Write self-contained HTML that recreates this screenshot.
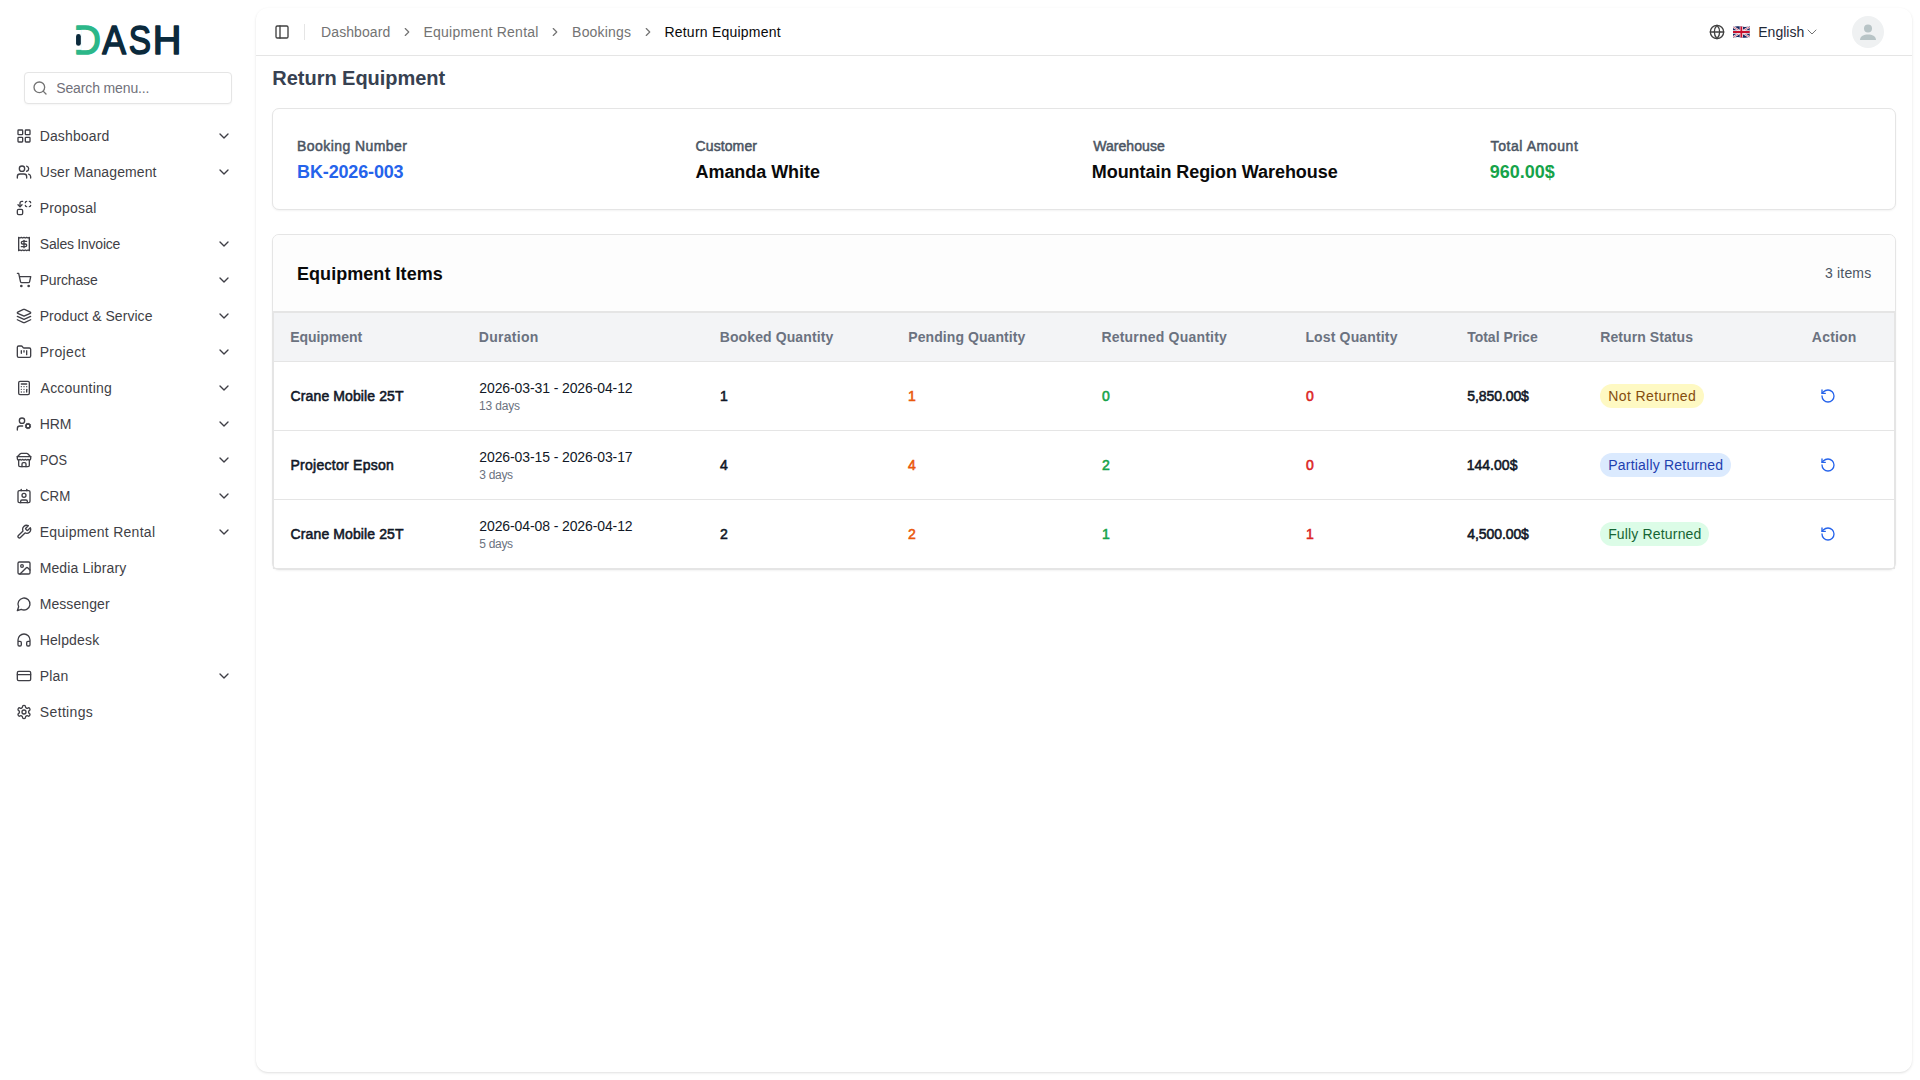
<!DOCTYPE html>
<html lang="en">
<head>
<meta charset="utf-8">
<title>Return Equipment</title>
<style>
*{box-sizing:border-box;margin:0;padding:0}
html,body{width:1920px;height:1080px;overflow:hidden}
body{font-family:"Liberation Sans",sans-serif;background:#fff;color:#0a0a0a;position:relative;font-size:14px}
svg.i{width:16px;height:16px;fill:none;stroke:currentColor;stroke-width:2;stroke-linecap:round;stroke-linejoin:round;display:block;flex:none}
span.t{position:relative;white-space:nowrap}
em{font-style:normal}
/* ---------- sidebar ---------- */
.sb{position:absolute;left:0;top:0;width:256px;height:1080px;color:#3f3f46}
.logo{position:absolute;left:0;top:0;width:256px;height:70px}
.search{position:absolute;left:24px;top:72px;width:208px;height:32px;border:1px solid #e5e5e5;border-radius:4px;background:#fff;box-shadow:0 1px 2px rgba(0,0,0,.04)}
.search svg{position:absolute;left:7px;top:7px;color:#737373}
.search span{position:absolute;left:32px;top:0;line-height:30px;font-size:14px;color:#71717a}
.menu{position:absolute;left:8px;top:120px;width:232px;list-style:none}
.menu li{height:32px;margin-bottom:4px;display:flex;align-items:center;padding:0 8px;position:relative;font-size:14px;color:#3f3f46}
.menu li svg.i{margin-right:8px}
.menu li svg.c{position:absolute;right:8px;top:8px;margin:0}
/* ---------- main ---------- */
.main{position:absolute;left:256px;top:8px;width:1656px;height:1064px;background:#fff;border-radius:12px;box-shadow:0 1px 3px rgba(0,0,0,.10),0 1px 2px -1px rgba(0,0,0,.10)}
.hd{position:absolute;left:0;top:0;width:100%;height:48px;border-bottom:1px solid #e5e5e5}
.hd .tg{position:absolute;left:18px;top:16px;color:#404040}
.hd .sep{position:absolute;left:48px;top:16px;width:1px;height:16px;background:#e5e5e5}
.bc{position:absolute;left:65px;top:0;height:48px;display:flex;align-items:center;font-size:14px;color:#737373;white-space:nowrap}
.bc svg{position:absolute;top:17px;width:14px;height:14px;color:#737373}
.bc span.t{margin-right:34px}
.bc .cur{color:#0a0a0a}
.lang{position:absolute;left:1453px;top:0;height:48px;display:flex;align-items:center;color:#1f2937;font-size:14px}
.lang .gl{color:#404040}
.avatar{position:absolute;left:1596px;top:8px;width:32px;height:32px;border-radius:50%;background:#eff1f2;overflow:hidden}
h1{position:absolute;left:16px;top:56px;font-size:20px;line-height:28px;font-weight:700;color:#374151;white-space:nowrap}
.card{position:absolute;left:16px;width:1624px;border:1px solid #e5e5e5;border-radius:7px;background:#fff;box-shadow:0 1px 2px rgba(0,0,0,.05)}
.c1{top:100px;height:102px}
.c1 .col{position:absolute;top:27px}
.c1 .lb{font-size:14px;line-height:20px;color:#4b5563;-webkit-text-stroke:.5px currentColor;white-space:nowrap}
.c1 .vl{font-size:18px;line-height:28px;font-weight:700;color:#0a0a0a;margin-top:2px;white-space:nowrap}
.c2{top:226px;height:336px}
.c2 .ch{position:absolute;left:0;top:0;width:100%;height:77px;background:#fdfdfd;border-bottom:1px solid #e5e5e5;border-radius:6px 6px 0 0}
.c2 .ch b{position:absolute;left:24px;top:25px;font-size:18px;line-height:28px;color:#0a0a0a;white-space:nowrap}
.c2 .ch em{position:absolute;right:24px;top:28px;font-size:14px;line-height:20px;color:#4b5563;white-space:nowrap}
.tw{position:absolute;left:0;top:77px;width:1622px;height:257px;border:1px solid #e5e5e5;overflow:hidden}
table{position:absolute;left:0;top:0;width:1620px;border-collapse:separate;border-spacing:0;table-layout:fixed}
th{height:49px;background:#f3f4f6;text-align:left;font-size:14px;font-weight:700;color:#6b7280;padding:0 0 0 16px;border-bottom:1px solid #e5e5e5;white-space:nowrap}
td{height:69px;padding:0 0 0 16px;font-size:14px;border-bottom:1px solid #e5e5e5;white-space:nowrap;vertical-align:middle;color:#111827}
tr:last-child td{border-bottom:none;height:68px}
td.m{-webkit-text-stroke:.55px currentColor}
td .d1{font-size:14px;line-height:20px;color:#111827}
td .d2{font-size:12px;line-height:16px;color:#6b7280}
.or{color:#ea580c}.gr{color:#16a34a}.rd{color:#dc2626}
.bdg{display:inline-block;height:24px;line-height:24px;border-radius:12px;padding:0 8px;font-size:14px}
.by{background:#fef9c3;color:#854d0e}.bb{background:#dbeafe;color:#1e40af}.bg{background:#dcfce7;color:#166534}
td .i{color:#2563eb;margin-left:8px}
</style>
</head>
<body>
<svg width="0" height="0" style="position:absolute">
<defs>
<symbol id="chev" viewBox="0 0 24 24"><path d="m6 9 6 6 6-6"/></symbol>
<symbol id="chevr" viewBox="0 0 24 24"><path d="m9 18 6-6-6-6"/></symbol>
<symbol id="rot" viewBox="0 0 24 24"><path d="M3 12a9 9 0 1 0 9-9 9.750 9.750 0 0 0-6.740 2.740L3 8"/><path d="M3 3v5h5"/></symbol>
</defs>
</svg>

<aside class="sb">
<svg class="logo" width="256" height="70" viewBox="0 0 256 70">
<text y="54.06" font-family="Liberation Sans, sans-serif" font-size="40.45" stroke-width="1.6" stroke-linejoin="round"><tspan x="73.71" textLength="27.06" lengthAdjust="spacingAndGlyphs" fill="#2cb789" stroke="#2cb789">D</tspan><tspan x="102.37" textLength="23.73" lengthAdjust="spacingAndGlyphs" fill="#0b2a3c" stroke="#0b2a3c">A</tspan><tspan x="128.70" textLength="22.23" lengthAdjust="spacingAndGlyphs" fill="#0b2a3c" stroke="#0b2a3c">S</tspan><tspan x="152.72" textLength="28.63" lengthAdjust="spacingAndGlyphs" fill="#0b2a3c" stroke="#0b2a3c">H</tspan></text>
<rect x="74.5" y="30.0" width="7.3" height="19.8" fill="#fff"/>
<rect x="76.05" y="34" width="4.8" height="11.8" rx="2.4" fill="#0b2a3c"/>
</svg>

<div class="search"><svg class="i" viewBox="0 0 24 24"><circle cx="11" cy="11" r="8"/><path d="m21 21-4.300-4.300"/></svg><span id="srch" class="t" style="letter-spacing:-0.125px;left:31.20px">Search menu...</span></div>
<ul class="menu">
<li><svg class="i" viewBox="0 0 24 24"><rect width="7" height="7" x="3" y="3" rx="1"/><rect width="7" height="7" x="14" y="3" rx="1"/><rect width="7" height="7" x="14" y="14" rx="1"/><rect width="7" height="7" x="3" y="14" rx="1"/></svg><span id="m0" class="t" style="letter-spacing:0.146px;left:-0.38px">Dashboard</span><svg class="i c"><use href="#chev"/></svg></li>
<li><svg class="i" viewBox="0 0 24 24"><path d="M16 21v-2a4 4 0 0 0-4-4H6a4 4 0 0 0-4 4v2"/><circle cx="9" cy="7" r="4"/><path d="M22 21v-2a4 4 0 0 0-3-3.87"/><path d="M16 3.13a4 4 0 0 1 0 7.75"/></svg><span id="m1" class="t" style="letter-spacing:0.113px;left:-0.25px">User Management</span><svg class="i c"><use href="#chev"/></svg></li>
<li><svg class="i" viewBox="0 0 24 24"><path d="M14 4a2 2 0 0 1 2-2"/><path d="M16 10a2 2 0 0 1-2-2"/><path d="M20 2a2 2 0 0 1 2 2"/><path d="M22 8a2 2 0 0 1-2 2"/><path d="m3 7 3 3 3-3"/><path d="M6 10V5a3 3 0 0 1 3-3h1"/><rect x="2" y="14" width="8" height="8" rx="2"/></svg><span id="m2" class="t" style="letter-spacing:0.227px;left:-0.38px">Proposal</span></li>
<li><svg class="i" viewBox="0 0 24 24"><path d="M4 2v20l2-1 2 1 2-1 2 1 2-1 2 1 2-1 2 1V2l-2 1-2-1-2 1-2-1-2 1-2-1-2 1Z"/><path d="M16 8h-6a2 2 0 1 0 0 4h4a2 2 0 1 1 0 4H8"/><path d="M12 17.5v-11"/></svg><span id="m3" class="t" style="letter-spacing:-0.234px;left:-0.16px">Sales Invoice</span><svg class="i c"><use href="#chev"/></svg></li>
<li><svg class="i" viewBox="0 0 24 24"><circle cx="8" cy="21" r="1"/><circle cx="19" cy="21" r="1"/><path d="M2.05 2.05h2l2.66 12.42a2 2 0 0 0 2 1.58h9.78a2 2 0 0 0 1.95-1.57l1.65-7.43H5.12"/></svg><span id="m4" class="t" style="letter-spacing:-0.144px;left:-0.38px">Purchase</span><svg class="i c"><use href="#chev"/></svg></li>
<li><svg class="i" viewBox="0 0 24 24"><path d="m12.83 2.18a2 2 0 0 0-1.66 0L2.6 6.08a1 1 0 0 0 0 1.83l8.58 3.91a2 2 0 0 0 1.66 0l8.58-3.9a1 1 0 0 0 0-1.83Z"/><path d="m22 17.65-9.17 4.16a2 2 0 0 1-1.66 0L2 17.65"/><path d="m22 12.65-9.17 4.16a2 2 0 0 1-1.66 0L2 12.65"/></svg><span id="m5" class="t" style="letter-spacing:0.047px;left:-0.38px">Product &amp; Service</span><svg class="i c"><use href="#chev"/></svg></li>
<li><svg class="i" viewBox="0 0 24 24"><path d="M4 20h16a2 2 0 0 0 2-2V8a2 2 0 0 0-2-2h-7.93a2 2 0 0 1-1.66-.9l-.82-1.2A2 2 0 0 0 7.93 3H4a2 2 0 0 0-2 2v13c0 1.1.9 2 2 2Z"/><path d="M8 10v4"/><path d="M12 10v2"/><path d="M16 10v6"/></svg><span id="m6" class="t" style="letter-spacing:0.381px;left:-0.38px">Project</span><svg class="i c"><use href="#chev"/></svg></li>
<li><svg class="i" viewBox="0 0 24 24"><rect width="16" height="20" x="4" y="2" rx="2"/><line x1="8" x2="16" y1="6" y2="6"/><line x1="16" x2="16" y1="14" y2="18"/><path d="M16 10h.01"/><path d="M12 10h.01"/><path d="M8 10h.01"/><path d="M12 14h.01"/><path d="M8 14h.01"/><path d="M12 18h.01"/><path d="M8 18h.01"/></svg><span id="m7" class="t" style="letter-spacing:0.210px;left:0.62px">Accounting</span><svg class="i c"><use href="#chev"/></svg></li>
<li><svg class="i" viewBox="0 0 24 24"><circle cx="18" cy="15" r="3"/><circle cx="9" cy="7" r="4"/><path d="M10 15H6a4 4 0 0 0-4 4v2"/><path d="m21.7 16.4-.9-.3"/><path d="m15.2 13.9-.9-.3"/><path d="m16.6 18.7.3-.9"/><path d="m19.1 12.2.3-.9"/><path d="m19.6 18.7-.4-1"/><path d="m16.8 12.3-.4-1"/><path d="m14.3 16.6 1-.4"/><path d="m20.7 13.8 1-.4"/></svg><span id="m8" class="t" style="letter-spacing:0.012px;left:-0.38px">HRM</span><svg class="i c"><use href="#chev"/></svg></li>
<li><svg class="i" viewBox="0 0 24 24"><path d="m2 7 4.41-4.41A2 2 0 0 1 7.83 2h8.34a2 2 0 0 1 1.42.59L22 7"/><path d="M4 12v8a2 2 0 0 0 2 2h12a2 2 0 0 0 2-2v-8"/><path d="M15 22v-4a2 2 0 0 0-2-2h-2a2 2 0 0 0-2 2v4"/><path d="M2 7h20"/><path d="M22 7v3a2 2 0 0 1-2 2a2.7 2.7 0 0 1-1.59-.63.7.7 0 0 0-.82 0A2.7 2.7 0 0 1 16 12a2.7 2.7 0 0 1-1.59-.63.7.7 0 0 0-.82 0A2.7 2.7 0 0 1 12 12a2.7 2.7 0 0 1-1.59-.63.7.7 0 0 0-.82 0A2.7 2.7 0 0 1 8 12a2.7 2.7 0 0 1-1.59-.63.7.7 0 0 0-.82 0A2.7 2.7 0 0 1 4 12a2 2 0 0 1-2-2V7"/></svg><span id="m9" class="t" style="display:inline-block;transform-origin:0 50%;transform:scaleX(0.9122);left:-0.01px">POS</span><svg class="i c"><use href="#chev"/></svg></li>
<li><svg class="i" viewBox="0 0 24 24"><path d="M16 2v2"/><path d="M7 22v-2a2 2 0 0 1 2-2h6a2 2 0 0 1 2 2v2"/><path d="M8 2v2"/><circle cx="12" cy="11" r="3"/><rect x="3" y="4" width="18" height="18" rx="2"/></svg><span id="m10" class="t" style="display:inline-block;transform-origin:0 50%;transform:scaleX(0.9509);left:0.02px">CRM</span><svg class="i c"><use href="#chev"/></svg></li>
<li><svg class="i" viewBox="0 0 24 24"><path d="M14.7 6.3a1 1 0 0 0 0 1.4l1.6 1.6a1 1 0 0 0 1.4 0l3.77-3.77a6 6 0 0 1-7.94 7.94l-6.91 6.91a2.12 2.12 0 0 1-3-3l6.91-6.91a6 6 0 0 1 7.94-7.94l-3.76 3.76z"/></svg><span id="m11" class="t" style="letter-spacing:0.273px;left:-0.38px">Equipment Rental</span><svg class="i c"><use href="#chev"/></svg></li>
<li><svg class="i" viewBox="0 0 24 24"><rect width="18" height="18" x="3" y="3" rx="2" ry="2"/><circle cx="9" cy="9" r="2"/><path d="m21 15-3.086-3.086a2 2 0 0 0-2.828 0L6 21"/></svg><span id="m12" class="t" style="letter-spacing:0.147px;left:-0.38px">Media Library</span></li>
<li><svg class="i" viewBox="0 0 24 24"><path d="M7.9 20A9 9 0 1 0 4 16.1L2 22Z"/></svg><span id="m13" class="t" style="letter-spacing:0.090px;left:-0.38px">Messenger</span></li>
<li><svg class="i" viewBox="0 0 24 24"><path d="M3 14h3a2 2 0 0 1 2 2v3a2 2 0 0 1-2 2H5a2 2 0 0 1-2-2v-7a9 9 0 0 1 18 0v7a2 2 0 0 1-2 2h-1a2 2 0 0 1-2-2v-3a2 2 0 0 1 2-2h3"/></svg><span id="m14" class="t" style="letter-spacing:0.173px;left:-0.38px">Helpdesk</span></li>
<li><svg class="i" viewBox="0 0 24 24"><rect width="20" height="14" x="2" y="5" rx="2"/><line x1="2" x2="22" y1="10" y2="10"/></svg><span id="m15" class="t" style="letter-spacing:0.235px;left:-0.38px">Plan</span><svg class="i c"><use href="#chev"/></svg></li>
<li><svg class="i" viewBox="0 0 24 24"><path d="M12.22 2h-.44a2 2 0 0 0-2 2v.18a2 2 0 0 1-1 1.73l-.43.25a2 2 0 0 1-2 0l-.15-.08a2 2 0 0 0-2.73.73l-.22.38a2 2 0 0 0 .73 2.73l.15.1a2 2 0 0 1 1 1.72v.51a2 2 0 0 1-1 1.74l-.15.09a2 2 0 0 0-.73 2.73l.22.38a2 2 0 0 0 2.73.73l.15-.08a2 2 0 0 1 2 0l.43.25a2 2 0 0 1 1 1.73V20a2 2 0 0 0 2 2h.44a2 2 0 0 0 2-2v-.18a2 2 0 0 1 1-1.73l.43-.25a2 2 0 0 1 2 0l.15.08a2 2 0 0 0 2.73-.73l.22-.39a2 2 0 0 0-.73-2.73l-.15-.08a2 2 0 0 1-1-1.74v-.5a2 2 0 0 1 1-1.74l.15-.09a2 2 0 0 0 .73-2.73l-.22-.38a2 2 0 0 0-2.73-.73l-.15.08a2 2 0 0 1-2 0l-.43-.25a2 2 0 0 1-1-1.73V4a2 2 0 0 0-2-2z"/><circle cx="12" cy="12" r="3"/></svg><span id="m16" class="t" style="letter-spacing:0.344px;left:-0.16px">Settings</span></li>
</ul>
</aside>

<main class="main">
<div class="hd">
<svg class="i tg" viewBox="0 0 24 24"><rect width="18" height="18" x="3" y="3" rx="2"/><path d="M9 3v18"/></svg>
<div class="sep"></div>
<div class="bc"><span id="b0" class="t" style="letter-spacing:0.086px;left:0.08px">Dashboard</span><svg class="i" style="left:79.0px"><use href="#chevr"/></svg><span id="b1" class="t" style="letter-spacing:0.248px;left:-0.87px">Equipment Rental</span><svg class="i" style="left:227.0px"><use href="#chevr"/></svg><span id="b2" class="t" style="letter-spacing:0.195px;left:-1.45px">Bookings</span><svg class="i" style="left:320.0px"><use href="#chevr"/></svg><span id="b3" class="t cur" style="letter-spacing:0.221px;left:-2.27px">Return Equipment</span></div>
<div class="lang"><svg class="i gl" viewBox="0 0 24 24"><circle cx="12" cy="12" r="10"/><path d="M12 2a14.500 14.500 0 0 0 0 20 14.500 14.500 0 0 0 0-20"/><path d="M2 12h20"/></svg>
<svg class="flag" width="16.700" height="12" viewBox="0 0 60 40" preserveAspectRatio="none" style="margin-left:8.300px"><path d="M0 3Q15 -1 30 2T60 1V37Q45 41 30 38T0 39Z" fill="#16265e"/><g stroke-linecap="butt"><path d="M1 3 59 37M59 3 1 37" stroke="#f4f4fa" stroke-width="7"/><path d="M1 3 59 37M59 3 1 37" stroke="#c8102e" stroke-width="2"/><path d="M30 2V38M0 20H60" stroke="#f6eef2" stroke-width="12"/><path d="M30 2V38M0 20H60" stroke="#c8102e" stroke-width="6.500"/></g></svg>
<em style="margin-left:8px"><span id="lng" class="t" style="letter-spacing:0.016px;left:0.28px">English</span></em><svg class="i" style="margin-left:0;color:#737373;stroke-width:1.5"><use href="#chev"/></svg></div>
<div class="avatar"><svg viewBox="0 0 32 32" width="32" height="32"><circle cx="16" cy="12.500" r="4" fill="#b8c4c6"/><path d="M8 24c0-4 4-5.600 8-5.600s8 1.600 8 5.600z" fill="#b8c4c6"/></svg></div>

</div>
<h1><span id="h1" class="t" style="letter-spacing:-0.040px;left:0.37px">Return Equipment</span></h1>
<section class="card c1">
<div class="col" style="left:24px"><div class="lb"><span id="l0" class="t" style="letter-spacing:0.426px;left:0.09px">Booking Number</span></div><div class="vl" style="color:#2563eb"><span id="v0" class="t" style="letter-spacing:-0.157px;left:0.11px">BK-2026-003</span></div></div>
<div class="col" style="left:422px"><div class="lb"><span id="l1" class="t" style="letter-spacing:0.101px;left:0.56px">Customer</span></div><div class="vl"><span id="v1" class="t" style="letter-spacing:-0.044px;left:0.48px">Amanda White</span></div></div>
<div class="col" style="left:819px"><div class="lb"><span id="l2" class="t" style="letter-spacing:0.059px;left:1.21px">Warehouse</span></div><div class="vl"><span id="v2" class="t" style="letter-spacing:-0.060px;left:-0.20px">Mountain Region Warehouse</span></div></div>
<div class="col" style="left:1216px"><div class="lb"><span id="l3" class="t" style="letter-spacing:0.570px;left:1.60px">Total Amount</span></div><div class="vl" style="color:#16a34a"><span id="v3" class="t" style="letter-spacing:-0.012px;left:0.72px">960.00$</span></div></div>
</section>
<section class="card c2">
<div class="ch"><b><span id="ct" class="t" style="letter-spacing:0.059px;left:-0.05px">Equipment Items</span></b><em><span id="cn" class="t" style="letter-spacing:0.152px;left:0.31px">3 items</span></em></div>
<div class="tw"><table><colgroup><col style="width:189px"><col style="width:241px"><col style="width:188px"><col style="width:194px"><col style="width:204px"><col style="width:161px"><col style="width:133px"><col style="width:212px"><col style="width:100px"></colgroup>
<thead><tr><th><span id="th0" class="t" style="letter-spacing:-0.051px;left:0.15px">Equipment</span></th><th><span id="th1" class="t" style="letter-spacing:0.291px;left:-0.26px">Duration</span></th><th><span id="th2" class="t" style="letter-spacing:0.102px;left:-0.26px">Booked Quantity</span></th><th><span id="th3" class="t" style="letter-spacing:0.068px;left:0.33px">Pending Quantity</span></th><th><span id="th4" class="t" style="letter-spacing:0.205px;left:-0.58px">Returned Quantity</span></th><th><span id="th5" class="t" style="letter-spacing:0.148px;left:-0.58px">Lost Quantity</span></th><th><span id="th6" class="t" style="letter-spacing:0.002px;left:0.14px">Total Price</span></th><th><span id="th7" class="t" style="letter-spacing:0.070px;left:0.33px">Return Status</span></th><th><span id="th8" class="t" style="letter-spacing:0.202px;left:-0.17px">Action</span></th></tr></thead>
<tbody>
<tr><td class="m"><span id="e0" class="t" style="letter-spacing:0.110px;left:0.62px">Crane Mobile 25T</span></td><td><div class="d1"><span id="d0" class="t" style="letter-spacing:-0.106px;left:0.31px">2026-03-31 - 2026-04-12</span></div><div class="d2"><span id="n0" class="t" style="letter-spacing:-0.175px;left:0.06px">13 days</span></div></td><td class="m">1</td><td class="m or">1</td><td class="m gr">0</td><td class="m rd">0</td><td class="m"><span id="p0" class="t" style="letter-spacing:-0.072px;left:0.20px">5,850.00$</span></td><td><span class="bdg by"><span id="s0" class="t" style="letter-spacing:0.399px;left:0.19px">Not Returned</span></span></td><td><svg class="i"><use href="#rot"/></svg></td></tr>
<tr><td class="m"><span id="e1" class="t" style="letter-spacing:0.273px;left:0.46px">Projector Epson</span></td><td><div class="d1"><span id="d1" class="t" style="letter-spacing:-0.106px;left:0.31px">2026-03-15 - 2026-03-17</span></div><div class="d2"><span id="n1" class="t" style="letter-spacing:-0.319px;left:0.37px">3 days</span></div></td><td class="m">4</td><td class="m or">4</td><td class="m gr">2</td><td class="m rd">0</td><td class="m"><span id="p1" class="t" style="letter-spacing:0.021px;left:-0.31px">144.00$</span></td><td><span class="bdg bb"><span id="s1" class="t" style="letter-spacing:0.215px;left:0.21px">Partially Returned</span></span></td><td><svg class="i"><use href="#rot"/></svg></td></tr>
<tr><td class="m"><span id="e2" class="t" style="letter-spacing:0.110px;left:0.62px">Crane Mobile 25T</span></td><td><div class="d1"><span id="d2" class="t" style="letter-spacing:-0.106px;left:0.31px">2026-04-08 - 2026-04-12</span></div><div class="d2"><span id="n2" class="t" style="letter-spacing:-0.314px;left:0.33px">5 days</span></div></td><td class="m">2</td><td class="m or">2</td><td class="m gr">1</td><td class="m rd">1</td><td class="m"><span id="p2" class="t" style="letter-spacing:-0.089px;left:0.33px">4,500.00$</span></td><td><span class="bdg bg"><span id="s2" class="t" style="letter-spacing:0.168px;left:0.14px">Fully Returned</span></span></td><td><svg class="i"><use href="#rot"/></svg></td></tr>
</tbody></table></div>
</section>
</main>
</body>
</html>
